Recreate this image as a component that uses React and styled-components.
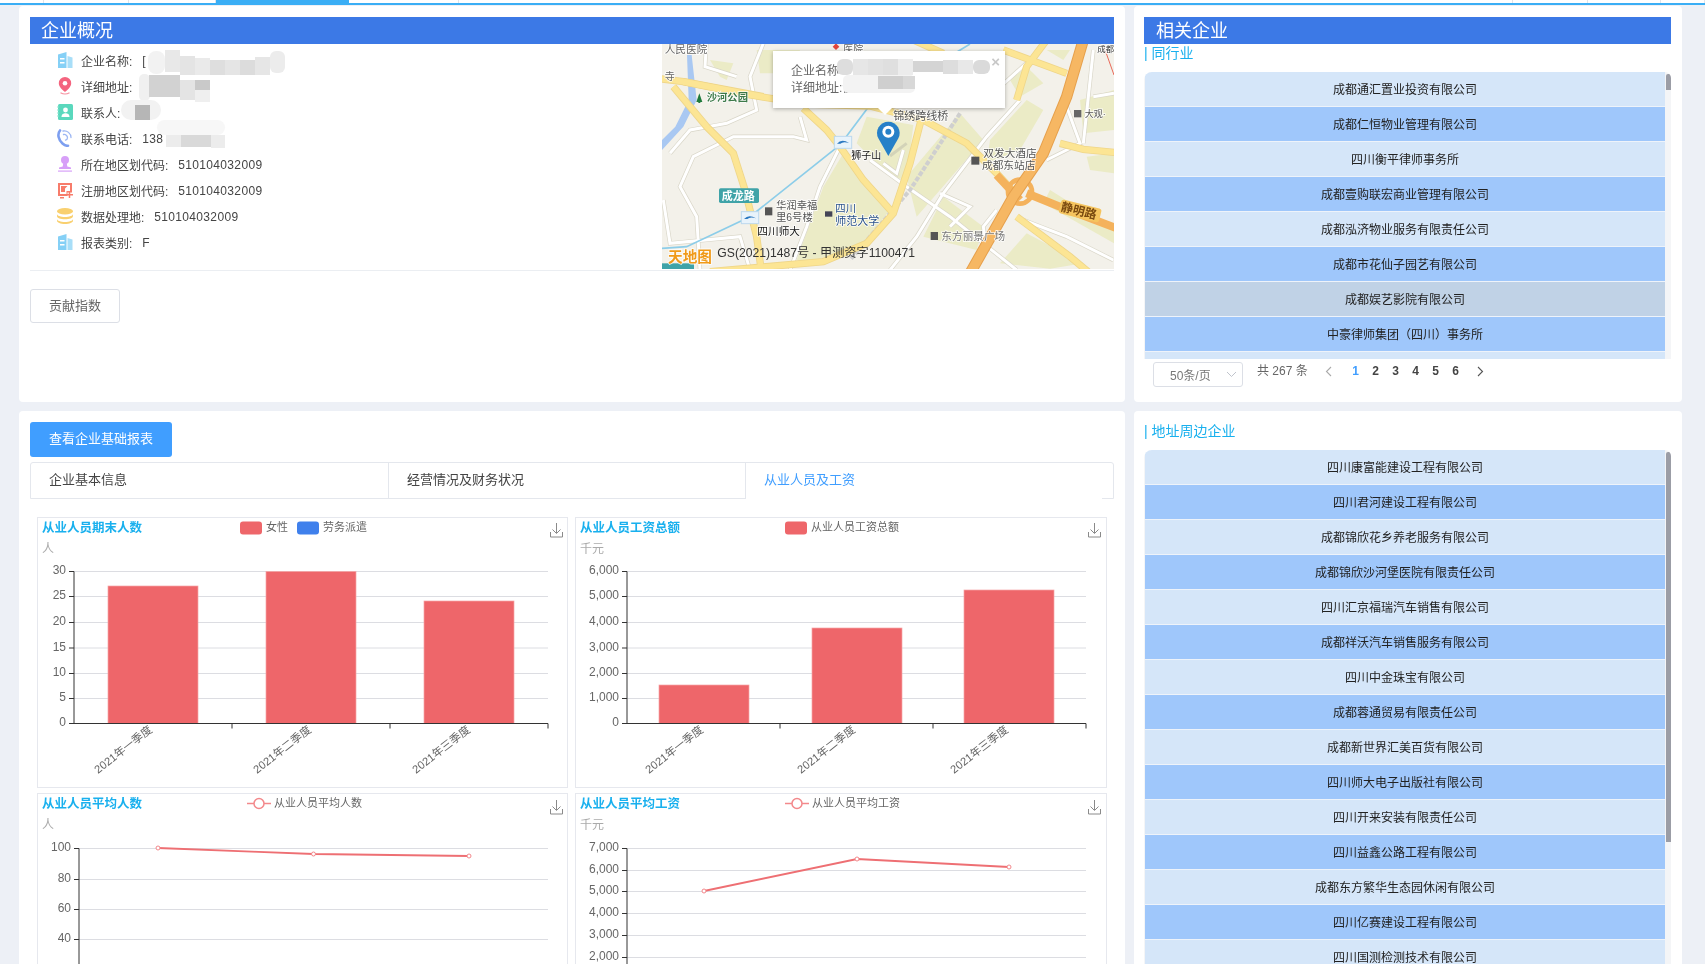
import React from "react";
import styled, { createGlobalStyle } from "styled-components";

const FONT = `"Liberation Sans", "Noto Sans CJK SC", sans-serif`;

const Global = createGlobalStyle`
  html, body { margin: 0; padding: 0; width: 1705px; height: 964px; overflow: hidden; background: #edf0f6; }
  body { font-family: ${FONT}; font-size: 12px; color: #333; }
  * { box-sizing: border-box; }
`;

const Page = styled.div`
  width: 1705px;
  height: 964px;
  overflow: hidden;
  background: #edf0f6;
  filter: blur(0.35px);
`;

const TabStrip = styled.div`
  display: flex;
  height: 5px;
  background: #fff;
  border-bottom: 2px solid #3aaef5;
`;
const StripTab = styled.div`
  flex: 0 0 ${(p) => p.$w}px;
  margin-bottom: ${(p) => (p.$active ? "-2px" : "0")};
  background: ${(p) => (p.$active ? "#3aaef5" : "#fff")};
  border-right: 1px solid ${(p) => (p.$active ? "#3aaef5" : "#dfe4ea")};
`;

const Layout = styled.div`
  display: grid;
  grid-template-columns: 1106px 548px;
  grid-template-rows: 396px 600px;
  gap: 9px;
  padding: 1px 0 0 19px;
`;

const Card = styled.section`
  position: relative;
  background: #fff;
  border-radius: 4px;
  padding: 11px 11px 0 ${(p) => p.$left || 11}px;
`;

const Banner = styled.h2`
  margin: 0;
  height: 27px;
  line-height: 29px;
  padding-left: ${(p) => p.$indent}px;
  background: #3c79e6;
  color: #fff;
  font-size: 18px;
  font-weight: 400;
`;

const OverviewBody = styled.div`
  display: flex;
  height: 225px;
`;
const InfoList = styled.ul`
  flex: 1;
  list-style: none;
  margin: 0;
  padding: 3px 0 0 27px;
`;
const InfoRow = styled.li`
  display: flex;
  align-items: center;
  height: 26px;
  color: #444;
  white-space: nowrap;
  font-size: 12px;
  svg { flex: none; margin-right: 8px; }
`;
const InfoValue = styled.span`
  margin-left: 10px;
  padding-top: 2px;
  letter-spacing: 0.33px;
`;

const MapFrame = styled.div`
  position: relative;
  flex: 0 0 452px;
  height: 225px;
  overflow: hidden;
  background: #f3f1ea;
  svg { display: block; }
`;
const Popup = styled.div`
  position: absolute;
  left: 111px;
  top: 7px;
  width: 232px;
  height: 57px;
  padding: 12px 0 0 18px;
  background: #fff;
  box-shadow: 0 1px 4px rgba(0, 0, 0, 0.3);
  font-size: 12px;
  line-height: 17px;
  color: #666;
  &::after {
    content: "";
    position: absolute;
    left: 104px;
    bottom: -7px;
    border: 8px solid transparent;
    border-bottom: 0;
    border-top-color: #fff;
  }
`;
const PopupClose = styled.span`
  position: absolute;
  right: 5px;
  top: 2px;
  font-size: 15px;
  font-weight: 700;
  line-height: 18px;
  color: #c8c8c8;
`;

const Smudge = styled.i`
  position: absolute;
  left: ${(p) => p.$x}px;
  top: ${(p) => p.$y}px;
  width: ${(p) => p.$w}px;
  height: ${(p) => p.$h}px;
  background: ${(p) => p.$c};
  border-radius: ${(p) => p.$r || 0}px;
`;

const Divider = styled.div`
  height: 1px;
  margin-top: 1px;
  background: #ebeef2;
`;

const GhostButton = styled.button`
  display: block;
  width: 90px;
  height: 34px;
  margin-top: 18px;
  padding: 0 0 4px;
  border: 1px solid #dcdfe6;
  border-radius: 3px;
  background: #fff;
  color: #666;
  font-family: ${FONT};
  font-size: 13px;
`;

const SubTitle = styled.div`
  height: 18px;
  line-height: 18px;
  font-size: 14px;
  color: #19b0ee;
  white-space: pre;
  padding-left: 0;
`;

const CompanyList = styled.div`
  position: relative;
  margin-top: ${(p) => p.$top}px;
  height: ${(p) => p.$h}px;
  overflow: hidden;
  border-top-left-radius: 8px;
  border-top-right-radius: 6px;
  background: #f4f5f7;
`;
const Rows = styled.div`
  width: 520px;
  margin-left: 1px;
  background: #fff;
`;
const Row = styled.div`
  height: 35px;
  line-height: 36px;
  border-bottom: 1px solid #eef3fa;
  text-align: center;
  font-size: 12px;
  color: #222;
  background: ${(p) => p.$bg};
`;
const Thumb = styled.div`
  position: absolute;
  right: 0;
  top: 2px;
  width: 5px;
  height: ${(p) => p.$h}px;
  border-radius: 2px 2px 0 0;
  background: #9b9da6;
`;

const Pager = styled.div`
  display: flex;
  align-items: flex-start;
  height: 30px;
  padding: 3px 0 0 9px;
  color: #666;
  font-size: 12px;
`;
const PageSize = styled.div`
  display: flex;
  align-items: center;
  justify-content: space-between;
  width: 90px;
  height: 25px;
  padding: 0 5px 0 16px;
  border: 1px solid #dcdfe6;
  border-radius: 3px;
  color: #777;
`;
const Total = styled.span`
  margin-left: 14px;
  line-height: 18px;
  color: #666;
`;
const Pages = styled.div`
  display: flex;
  align-items: center;
  height: 18px;
  margin-left: 10px;
`;
const PageNo = styled.span`
  width: 20px;
  margin-left: ${(p) => p.$gap || 0}px;
  text-align: center;
  font-weight: 700;
  font-size: 12px;
  color: ${(p) => (p.$active ? "#409eff" : "#444")};
`;
const PageArrow = styled.span`
  display: flex;
  justify-content: center;
  width: ${(p) => p.$w}px;
`;

const PrimaryButton = styled.button`
  display: block;
  width: 142px;
  height: 35px;
  padding: 0 0 4px;
  border: 0;
  border-radius: 3px;
  background: #409eff;
  color: #fff;
  font-family: ${FONT};
  font-size: 13px;
`;

const TabsBar = styled.div`
  display: flex;
  width: 1084px;
  height: 37px;
  margin-top: 5px;
  border: 1px solid #e4e7ed;
  border-radius: 3px 3px 0 0;
`;
const TabItem = styled.div`
  flex: 0 0 ${(p) => p.$w}px;
  position: relative;
  padding-left: ${(p) => p.$pad}px;
  line-height: 33px;
  font-size: 13px;
  color: ${(p) => (p.$active ? "#409eff" : "#444")};
  border-right: ${(p) => (p.$last ? "0" : "1px solid #e4e7ed")};
  ${(p) =>
    p.$active &&
    `&::after { content: ""; position: absolute; left: 0; right: 11px; bottom: -1px; height: 1px; background: #fff; }`}
`;

const ChartGrid = styled.div`
  display: grid;
  grid-template-columns: 531px 532px;
  grid-template-rows: 271px 200px;
  gap: 5px 7px;
  margin: 18px 0 0 7px;
`;
const ChartBox = styled.div`
  position: relative;
  border: 1px solid #e6e8ee;
  svg { display: block; }
`;
const ChartTitle = styled.div`
  position: absolute;
  left: 4px;
  top: ${(p) => p.$top}px;
  font-size: 12.5px;
  font-weight: 700;
  line-height: 18px;
  color: #19b0ee;
`;

/* ---------- icons ---------- */
const BuildingIcon = () => (
  <svg width="16" height="16" viewBox="0 0 16 16">
    <path d="M1 2.5 9.5 0v16H1z" fill="#85d0f6" />
    <path d="M10.5 4 15.5 5.5V16h-5z" fill="#a8def8" />
    <path d="M3 6h4.5v1.6H3zM3 10h4.5v1.6H3z" fill="#fff" />
  </svg>
);
const PinIcon = () => (
  <svg width="16" height="18" viewBox="0 0 16 18">
    <path d="M8 0a6.2 6.2 0 0 1 6.2 6.2C14.2 10 10 13.4 8 15 6 13.4 1.800 10 1.800 6.200A6.200 6.200 0 0 1 8 0z" fill="#f4647f" />
    <circle cx="8" cy="6.200" r="2.300" fill="#fff" />
    <path d="M3.500 15.700q4.500 2.600 9 0" fill="none" stroke="#f7909f" strokeWidth="1.200" />
  </svg>
);
const ContactIcon = () => (
  <svg width="16" height="16" viewBox="0 0 16 16">
    <rect x="1" y="0" width="15" height="16" rx="1.500" fill="#5ad8bd" />
    <path d="M0 3h2M0 6h2M0 9h2M0 12h2" stroke="#8fe6d2" strokeWidth="1" />
    <circle cx="8.500" cy="6" r="2.400" fill="#fff" />
    <path d="M4.500 13c0-3 2-3.800 4-3.800s4 .8 4 3.800z" fill="#fff" />
  </svg>
);
const PhoneIcon = () => (
  <svg width="16" height="18" viewBox="0 0 16 18" fill="none">
    <path d="M3 1.500C0 5 1.500 11 5.500 14.500c2 1.700 4 2.500 5.500 2.200" stroke="#7d9ff0" strokeWidth="2.600" strokeLinecap="round" />
    <path d="M6 2c4-1 8 2.500 8 6.500M6.500 5.500c2-.5 4 1.200 4 3.200-.1 1.300-1 2.300-2 2.500" stroke="#9db7f3" strokeWidth="1.300" strokeLinecap="round" />
  </svg>
);
const StampIcon = () => (
  <svg width="16" height="16" viewBox="0 0 16 16">
    <circle cx="8" cy="4" r="4" fill="#d79ff8" />
    <path d="M6.300 7h3.400l.6 3.500 3.700 1v1.500H2v-1.500l3.700-1z" fill="#d79ff8" />
    <rect x="1" y="14.300" width="14" height="1.700" fill="#e3bdfa" />
  </svg>
);
const ReportIcon = () => (
  <svg width="16" height="17" viewBox="0 0 16 17">
    <path d="M1 1h14v9.500h-4.500V14H1z" fill="#f77c6b" />
    <path d="M3 3h10v6H9.500v3H3z" fill="#fff" />
    <path d="M4 4h6.500L8 6.500V10H4z" fill="#f77c6b" />
    <path d="M12.500 9.500V16M9.500 12.800H16M3 15.700h4" stroke="#f77c6b" strokeWidth="1.500" />
  </svg>
);
const CoinsIcon = () => (
  <svg width="16" height="16" viewBox="0 0 16 16">
    <ellipse cx="8" cy="3.200" rx="8" ry="3.200" fill="#f9d06f" />
    <path d="M0 6c0 1.600 3.600 3 8 3s8-1.400 8-3v2.300c0 1.700-3.600 3-8 3s-8-1.300-8-3z" fill="#f9d06f" />
    <path d="M0 11c0 1.600 3.600 3 8 3s8-1.400 8-3v1.800c0 1.800-3.600 3.200-8 3.200s-8-1.400-8-3.200z" fill="#f9d06f" />
  </svg>
);
const DownloadIcon = ({ x, y }) => (
  <g transform={`translate(${x} ${y})`} fill="none" stroke="#8a8a8a" strokeWidth="1">
    <path d="M6.500 0v10M2.500 6.500 6.500 10.500 10.500 6.500M.5 9v5h12V9" />
  </g>
);
const Caret = ({ dir, color = "#888" }) => (
  <svg width="7" height="11" viewBox="0 0 7 11">
    <path d={dir === "left" ? "M6 1 1.500 5.500 6 10" : "M1 1 5.500 5.500 1 10"} fill="none" stroke={color} strokeWidth="1.100" />
  </svg>
);
const ChevronDown = () => (
  <svg width="11" height="7" viewBox="0 0 11 7">
    <path d="M1 1 5.500 5.500 10 1" fill="none" stroke="#c0c4cc" strokeWidth="1" />
  </svg>
);

/* ---------- map ---------- */
const YELLOW = [
  "M20 145L100 155 300 195 470 222 660 228 820 270 950 340 1040 430 1095 490",
  "M70 170L170 290 250 370 285 480 320 620 335 730",
  "M460 235L530 300 570 350 640 450 730 550",
  "M812 275L780 400 730 550 650 640 520 695 180 725",
  "M1100 560L1260 680 1320 730",
  "M1060 60L1250 130",
  "M1190 30L1130 110 1100 210",
  "M1230 340L1300 358 1400 368",
  "M790 30L880 70",
  "M100 155L340 200",
];
const WHITE = [
  "M170 30L165 110 260 140",
  "M340 40L300 140 320 240 230 280 120 300 60 370",
  "M450 260L470 330 430 320 250 320 130 380 90 470 140 560 150 720",
  "M570 350L510 470 470 590 420 720",
  "M660 390L770 470 900 560 1000 640 1100 720",
  "M1110 210L1010 320 880 490 800 620 720 720",
  "M1000 100L1040 180 1140 90",
  "M760 360L740 430 700 400",
  "M1250 230L1290 340 1190 390",
  "M1120 570L1250 620 1390 690",
  "M1040 540L1000 590 1010 660",
  "M40 510L60 640 270 620 300 720",
  "M870 490L960 530 900 590",
  "M1330 60L1300 340",
  "M1330 200L1392 190",
];
const BLOCKS = [
  "M650 260L790 285 770 450 720 440 620 340z",
  "M520 470L580 370 720 540 640 640 500 690 440 690z",
  "M880 500L1000 590 980 660 820 620z",
  "M1130 610L1300 700 1200 716 1050 700z",
  "M1020 330L1130 210 1180 240 1110 360 1010 400z",
  "M180 90L250 100 230 150 210 140z",
  "M1290 210L1392 180 1392 300 1300 310z",
  "M1190 60L1260 60 1240 90z",
  "M1080 150L1130 110 1180 160 1110 200z",
  "M1310 380L1392 370 1392 430 1320 420z",
  "M770 440L880 310 930 250 1000 330 870 480 800 560z",
  "M320 60L450 60 430 130 330 130z",
  "M1200 480L1392 600 1392 640 1180 520z",
];
const MapLabel = styled.text`
  font-family: ${FONT};
  font-size: ${(p) => p.$s || 34}px;
  fill: ${(p) => p.$c || "#666"};
  font-weight: ${(p) => p.$w || 400};
  paint-order: stroke;
  stroke: ${(p) => (p.$noHalo ? "none" : "#ffffffd0")};
  stroke-width: 5px;
`;
const MetroBadge = ({ x, y }) => (
  <g transform={`translate(${x} ${y})`}>
    <rect width="52" height="36" fill="#e8f3fb" stroke="#bcd8ee" strokeWidth="3" />
    <path d="M8 22q14-16 36-2q-18-6-26 2z" fill="#2a78c0" />
  </g>
);
const MapArt = () => (
  <svg width="452" height="225" viewBox="36 42 1356 675">
    <rect x="36" y="42" width="1356" height="675" fill="#f3f1ea" />
    {BLOCKS.map((d) => <path key={d} d={d} fill="#ebebc6" />)}
    <path d="M36 360L100 290 140 210 125 75h-14l5 135-40 80-40 40z" fill="#a9c8f2" />
    {WHITE.map((d) => <path key={d} d={d} fill="none" stroke="#d9d6c8" strokeWidth="13" />)}
    {WHITE.map((d) => <path key={d + "w"} d={d} fill="none" stroke="#fff" strokeWidth="9" />)}
    <path d="M930 250L780 480 600 690" fill="none" stroke="#cfcfcf" strokeWidth="12" strokeDasharray="14 5" />
    <path d="M960 42L660 225 570 345 300 560 110 650 36 655" fill="none" stroke="#8ccde9" strokeWidth="5" />
    {YELLOW.map((d) => <path key={d} d={d} fill="none" stroke="#efd68a" strokeWidth="22" />)}
    {YELLOW.map((d) => <path key={d + "y"} d={d} fill="none" stroke="#fce594" strokeWidth="17" />)}
    <circle cx="1110" cy="485" r="36" fill="none" stroke="#f4b25c" strokeWidth="14" />
    <path d="M1040 435L1110 510M1130 490L1230 530 1400 595" fill="none" stroke="#f4b25c" strokeWidth="24" />
    <path d="M1300 30L1250 200 1180 370 1090 500 960 730" fill="none" stroke="#e6a04c" strokeWidth="34" />
    <path d="M1300 30L1250 200 1180 370 1090 500 960 730" fill="none" stroke="#f6b763" strokeWidth="28" />
    <path d="M1360 45L1392 135" fill="none" stroke="#e86a5a" strokeWidth="3" />
    <MapLabel x="44" y="70" $s={32}>人民医院</MapLabel>
    <MapLabel x="44" y="150" $s={30}>寺</MapLabel>
    <path d="M148 190l-9 26h6v3h6v-3h6z" fill="#1f7a3c" />
    <MapLabel x="170" y="212" $s={31} $c="#3d7a4a" $w={700}>沙河公园</MapLabel>
    <MapLabel x="580" y="68" $s={30}>医院</MapLabel>
    <path d="M558 40l10 10-10 10-10-10z" fill="#e0453c" />
    <MapLabel x="730" y="270" $s={33} $c="#555">锦绣跨线桥</MapLabel>
    <MapLabel x="1000" y="380" $s={32} $c="#555">双发大酒店</MapLabel>
    <MapLabel x="996" y="416" $s={32} $c="#555">成都东站店</MapLabel>
    <rect x="964" y="380" width="24" height="24" fill="#555" />
    <MapLabel x="604" y="386" $s={30} $c="#111">狮子山</MapLabel>
    <MapLabel x="1304" y="262" $s={27} $c="#555">大观·</MapLabel>
    <rect x="1272" y="240" width="22" height="22" fill="#666" />
    <MapLabel x="1342" y="66" $s={25} $c="#333">成都</MapLabel>
    <rect x="207" y="475" width="120" height="44" rx="5" fill="#3fa3a8" />
    <MapLabel x="215" y="510" $s={33} $c="#fff" $w={700} $noHalo>成龙路</MapLabel>
    <MapLabel x="378" y="536" $s={31} $c="#555">华润幸福</MapLabel>
    <MapLabel x="378" y="572" $s={31} $c="#555">里6号楼</MapLabel>
    <rect x="345" y="532" width="22" height="24" fill="#555" />
    <rect x="525" y="544" width="22" height="16" fill="#445" />
    <MapLabel x="556" y="546" $s={31} $c="#28508a">四川</MapLabel>
    <MapLabel x="556" y="584" $s={33} $c="#28508a">师范大学</MapLabel>
    <MapLabel x="322" y="616" $s={32} $c="#111">四川师大</MapLabel>
    <rect x="842" y="606" width="22" height="24" fill="#555" />
    <MapLabel x="874" y="630" $s={32} $c="#777">东方丽景广场</MapLabel>
    <g transform="rotate(14 1290 545)">
      <rect x="1228" y="522" width="124" height="42" rx="8" fill="#f5c45e" />
      <MapLabel x="1232" y="556" $s={36} $c="#7a4a10" $w={700} $noHalo>静明路</MapLabel>
    </g>
    <MetroBadge x={553} y={319} />
    <MetroBadge x={274} y={545} />
    <rect x="36" y="700" width="96" height="20" fill="#3fa3a8" />
    <MapLabel x="54" y="696" $s={44} $c="#f09a1a" $w={700}>天地图</MapLabel>
    <MapLabel x="202" y="680" $s={36.500} $c="#333" $noHalo>GS(2021)1487号 - 甲测资字1100471</MapLabel>
    <path d="M720 378 770 340" stroke="#b8b8a8" strokeWidth="9" opacity="0.45" />
    <path d="M715 378 685 325a34 34 0 1 1 60 0z" fill="#2680c8" />
    <circle cx="715" cy="305" r="18" fill="#fff" />
    <circle cx="715" cy="305" r="9" fill="#2680c8" />
  </svg>
);

/* ---------- charts ---------- */
const Axis = styled.text`
  font-family: ${FONT};
  font-size: 12px;
  fill: #666;
`;
const CategoryText = styled(Axis)`
  font-size: 11.2px;
`;
const LegendText = styled.text`
  font-family: ${FONT};
  font-size: 11px;
  fill: #666;
`;
const UnitText = styled.text`
  font-family: ${FONT};
  font-size: 12px;
  fill: #aaa;
`;

const GRID_COLOR = "#dcdde2";
const AXIS_COLOR = "#333";

const BarChart = ({ left, right, ticks, ys, bars, labels, labelEnds, legend, unit, dl }) => (
  <svg width="530" height="269" viewBox="0 0 530 269">
    {legend.map((l) => (
      <g key={l.t}>
        <rect x={l.x} y="3.500" width="22" height="13" rx="3" fill={l.c} />
        <LegendText x={l.x + 26} y="13">{l.t}</LegendText>
      </g>
    ))}
    <UnitText x="4" y="35">{unit}</UnitText>
    <DownloadIcon x={dl} y={5} />
    {ys.map(([label, y], i) => (
      <g key={label}>
        {i < ys.length - 1 && <line x1={left} x2={right} y1={y} y2={y} stroke={GRID_COLOR} />}
        <line x1={left - 5} x2={left} y1={y} y2={y} stroke={AXIS_COLOR} />
        <Axis x={left - 8} y={y + 2.500} textAnchor="end">{label}</Axis>
      </g>
    ))}
    {bars.map(([x, top], i) => (
      <rect key={i} x={x} y={top} width="90" height={205.500 - top} fill="#ee666a" stroke="#f7a5a6" strokeWidth="0.700" />
    ))}
    <line x1={left} x2={left} y1={ys[0][1]} y2="205.500" stroke={AXIS_COLOR} />
    <line x1={left} x2={right} y1="205.500" y2="205.500" stroke={AXIS_COLOR} />
    {ticks.map((x) => <line key={x} x1={x} x2={x} y1="205.500" y2="210.500" stroke={AXIS_COLOR} />)}
    {labels.map((t, i) => (
      <CategoryText key={t} textAnchor="end" transform={`translate(${labelEnds[i]} 213) rotate(-38)`}>{t}</CategoryText>
    ))}
  </svg>
);

const LineChart = ({ left, right, ys, pts, legend, unit, dl }) => (
  <svg width="530" height="198" viewBox="0 0 530 198">
    <path d={`M${legend.x} 9.500h24`} stroke="#f3888b" strokeWidth="1.500" />
    <circle cx={legend.x + 12} cy="9.500" r="5" fill="#fff" stroke="#f3888b" strokeWidth="1.500" />
    <LegendText x={legend.x + 27} y="13">{legend.t}</LegendText>
    <UnitText x="4" y="35">{unit}</UnitText>
    <DownloadIcon x={dl} y={6} />
    {ys.map(([label, y]) => (
      <g key={label}>
        <line x1={left} x2={right} y1={y} y2={y} stroke={GRID_COLOR} />
        <line x1={left - 5} x2={left} y1={y} y2={y} stroke={AXIS_COLOR} />
        <Axis x={left - 8} y={y + 2.500} textAnchor="end">{label}</Axis>
      </g>
    ))}
    <line x1={left} x2={left} y1={ys[0][1]} y2="198" stroke={AXIS_COLOR} />
    <polyline points={pts.map((p) => p.join(",")).join(" ")} fill="none" stroke="#ee6f73" strokeWidth="1.800" />
    {pts.map(([x, y]) => <circle key={x} cx={x} cy={y} r="2" fill="#fff" stroke="#f3888b" />)}
  </svg>
);

const QUARTERS = ["2021年一季度", "2021年二季度", "2021年三季度"];

const RELATED = [
  ["成都通汇置业投资有限公司", "#d5e6f9"],
  ["成都仁恒物业管理有限公司", "#9fc7fb"],
  ["四川衡平律师事务所", "#d5e6f9"],
  ["成都壹购联宏商业管理有限公司", "#9fc7fb"],
  ["成都泓济物业服务有限责任公司", "#d5e6f9"],
  ["成都市花仙子园艺有限公司", "#9fc7fb"],
  ["成都娱艺影院有限公司", "#c0d2e6"],
  ["中豪律师集团（四川）事务所", "#9fc7fb"],
  ["", "#d5e6f9"],
];
const NEARBY = [
  "四川康富能建设工程有限公司",
  "四川君河建设工程有限公司",
  "成都锦欣花乡养老服务有限公司",
  "成都锦欣沙河堡医院有限责任公司",
  "四川汇京福瑞汽车销售有限公司",
  "成都祥沃汽车销售服务有限公司",
  "四川中金珠宝有限公司",
  "成都蓉通贸易有限责任公司",
  "成都新世界汇美百货有限公司",
  "四川师大电子出版社有限公司",
  "四川开来安装有限责任公司",
  "四川益鑫公路工程有限公司",
  "成都东方繁华生态园休闲有限公司",
  "四川亿赛建设工程有限公司",
  "四川国测检测技术有限公司",
];

/* page-coordinate mosaic tiles, offset to the overview card (19, 6) */
const CARD_TILES = [
  [148, 51, 17, 23, "#f2f2f2", 8],
  [165, 50, 15, 22, "#e8e8e8"],
  [180, 56, 15, 19, "#e4e4e4"],
  [195, 58, 15, 17, "#eaeaea"],
  [210, 60, 15, 15, "#dedede"],
  [225, 60, 15, 15, "#e5e5e5"],
  [240, 60, 15, 15, "#dcdcdc"],
  [255, 57, 15, 18, "#e6e6e6"],
  [270, 51, 15, 22, "#ececec", 6],
  [139, 74, 11, 27, "#f0f0f0", 5],
  [149, 75, 31, 22, "#d2d2d2"],
  [180, 80, 15, 20, "#e4e4e4"],
  [195, 80, 15, 10, "#c9c9c9"],
  [195, 90, 15, 12, "#efefef"],
  [121, 100, 40, 20, "#f2f2f2", 10],
  [135, 105, 15, 15, "#b6b6b6"],
  [157, 120, 68, 15, "#f7f7f7", 8],
  [166, 135, 15, 12, "#ececec"],
  [181, 135, 30, 12, "#d9d9d9"],
  [211, 135, 14, 13, "#ececec"],
];
const POPUP_TILES = [
  [64, 8, 16, 16, "#dddddd", 6],
  [80, 8, 15, 16, "#e6e6e6"],
  [95, 8, 15, 16, "#e2e2e2"],
  [110, 8, 15, 16, "#dfdfdf"],
  [125, 8, 15, 16, "#ececec"],
  [140, 10, 30, 11, "#d4d4d4"],
  [170, 9, 15, 14, "#dddddd"],
  [185, 9, 15, 14, "#e8e8e8"],
  [200, 9, 17, 14, "#dadada", 6],
  [70, 24, 72, 18, "#f3f3f3", 5],
  [105, 25, 25, 13, "#cfcfcf"],
  [130, 25, 12, 13, "#d8d8d8"],
];

const App = () => (
  <Page>
    <Global />
    <TabStrip>
      {[44, 85, 87, 133, 110, 1054, 75, 73, 44].map((w, i) => (
        <StripTab key={i} $w={w} $active={i === 3} />
      ))}
    </TabStrip>
    <Layout>
      <Card>
        <Banner $indent={11}>企业概况</Banner>
        <OverviewBody>
          <InfoList>
            <InfoRow><BuildingIcon />企业名称:<InfoValue>[</InfoValue></InfoRow>
            <InfoRow><PinIcon />详细地址:</InfoRow>
            <InfoRow><ContactIcon />联系人:</InfoRow>
            <InfoRow><PhoneIcon />联系电话:<InfoValue>138</InfoValue></InfoRow>
            <InfoRow><StampIcon />所在地区划代码:<InfoValue>510104032009</InfoValue></InfoRow>
            <InfoRow><ReportIcon />注册地区划代码:<InfoValue>510104032009</InfoValue></InfoRow>
            <InfoRow><CoinsIcon />数据处理地:<InfoValue>510104032009</InfoValue></InfoRow>
            <InfoRow><BuildingIcon />报表类别:<InfoValue>F</InfoValue></InfoRow>
          </InfoList>
          <MapFrame>
            <MapArt />
            <Popup>
              企业名称<br />详细地址:佳
              {POPUP_TILES.map(([x, y, w, h, c, r]) => (
                <Smudge key={`${x}-${y}`} $x={x} $y={y} $w={w} $h={h} $c={c} $r={r} />
              ))}
              <PopupClose>×</PopupClose>
            </Popup>
          </MapFrame>
        </OverviewBody>
        <Divider />
        <GhostButton>贡献指数</GhostButton>
        {CARD_TILES.map(([x, y, w, h, c, r]) => (
          <Smudge key={`${x}-${y}`} $x={x - 19} $y={y - 6} $w={w} $h={h} $c={c} $r={r} />
        ))}
      </Card>

      <Card $left={10}>
        <Banner $indent={12}>相关企业</Banner>
        <SubTitle>| 同行业</SubTitle>
        <CompanyList $top={10} $h={287}>
          <Rows>
            {RELATED.map(([name, bg], i) => <Row key={i} $bg={bg}>{name}</Row>)}
          </Rows>
          <Thumb $h={16} />
        </CompanyList>
        <Pager>
          <PageSize>50条/页<ChevronDown /></PageSize>
          <Total>共 267 条</Total>
          <Pages>
            <PageArrow $w={22}><Caret dir="left" color="#aaa" /></PageArrow>
            <PageNo $active $gap={6}>1</PageNo>
            <PageNo>2</PageNo>
            <PageNo>3</PageNo>
            <PageNo>4</PageNo>
            <PageNo>5</PageNo>
            <PageNo>6</PageNo>
            <PageArrow $w={30}><Caret dir="right" color="#555" /></PageArrow>
          </Pages>
        </Pager>
      </Card>

      <Card>
        <PrimaryButton>查看企业基础报表</PrimaryButton>
        <TabsBar>
          <TabItem $w={358} $pad={18}>企业基本信息</TabItem>
          <TabItem $w={357} $pad={18}>经营情况及财务状况</TabItem>
          <TabItem $w={367} $pad={18} $active $last>从业人员及工资</TabItem>
        </TabsBar>
        <ChartGrid>
          <ChartBox>
            <ChartTitle $top={1}>从业人员期末人数</ChartTitle>
            <BarChart
              left={36} right={510}
              ticks={[194, 352, 510]}
              ys={[["30", 53.500], ["25", 78.500], ["20", 104.500], ["15", 130], ["10", 155.500], ["5", 180.500], ["0", 205.500]]}
              bars={[[70, 68], [228, 53.500], [386, 83]]}
              labels={QUARTERS}
              labelEnds={[115, 274, 433]}
              legend={[{ x: 202, t: "女性", c: "#ee666a" }, { x: 259, t: "劳务派遣", c: "#3f80ec" }]}
              unit="人"
              dl={512}
            />
          </ChartBox>
          <ChartBox>
            <ChartTitle $top={1}>从业人员工资总额</ChartTitle>
            <BarChart
              left={51} right={510}
              ticks={[204, 357, 510]}
              ys={[["6,000", 53.500], ["5,000", 78.500], ["4,000", 104.500], ["3,000", 130], ["2,000", 155.500], ["1,000", 180.500], ["0", 205.500]]}
              bars={[[83, 167], [236, 110], [388, 72]]}
              labels={QUARTERS}
              labelEnds={[128, 280, 433]}
              legend={[{ x: 209, t: "从业人员工资总额", c: "#ee666a" }]}
              unit="千元"
              dl={512}
            />
          </ChartBox>
          <ChartBox>
            <ChartTitle $top={1}>从业人员平均人数</ChartTitle>
            <LineChart
              left={41} right={510}
              ys={[["100", 54.500], ["80", 85.500], ["60", 115.500], ["40", 145.500]]}
              pts={[[120, 54], [275.500, 60], [431, 62]]}
              legend={{ x: 209, t: "从业人员平均人数" }}
              unit="人"
              dl={512}
            />
          </ChartBox>
          <ChartBox>
            <ChartTitle $top={1}>从业人员平均工资</ChartTitle>
            <LineChart
              left={51} right={510}
              ys={[["7,000", 54.500], ["6,000", 76.500], ["5,000", 97.500], ["4,000", 119.500], ["3,000", 141.500], ["2,000", 163.500]]}
              pts={[[128, 97], [281, 65], [433, 73]]}
              legend={{ x: 209, t: "从业人员平均工资" }}
              unit="千元"
              dl={512}
            />
          </ChartBox>
        </ChartGrid>
      </Card>

      <Card $left={10}>
        <SubTitle>| 地址周边企业</SubTitle>
        <CompanyList $top={10} $h={530}>
          <Rows>
            {NEARBY.map((name, i) => (
              <Row key={name} $bg={i % 2 ? "#9fc7fb" : "#d5e6f9"}>{name}</Row>
            ))}
          </Rows>
          <Thumb $h={390} />
        </CompanyList>
      </Card>
    </Layout>
  </Page>
);

export default App;
